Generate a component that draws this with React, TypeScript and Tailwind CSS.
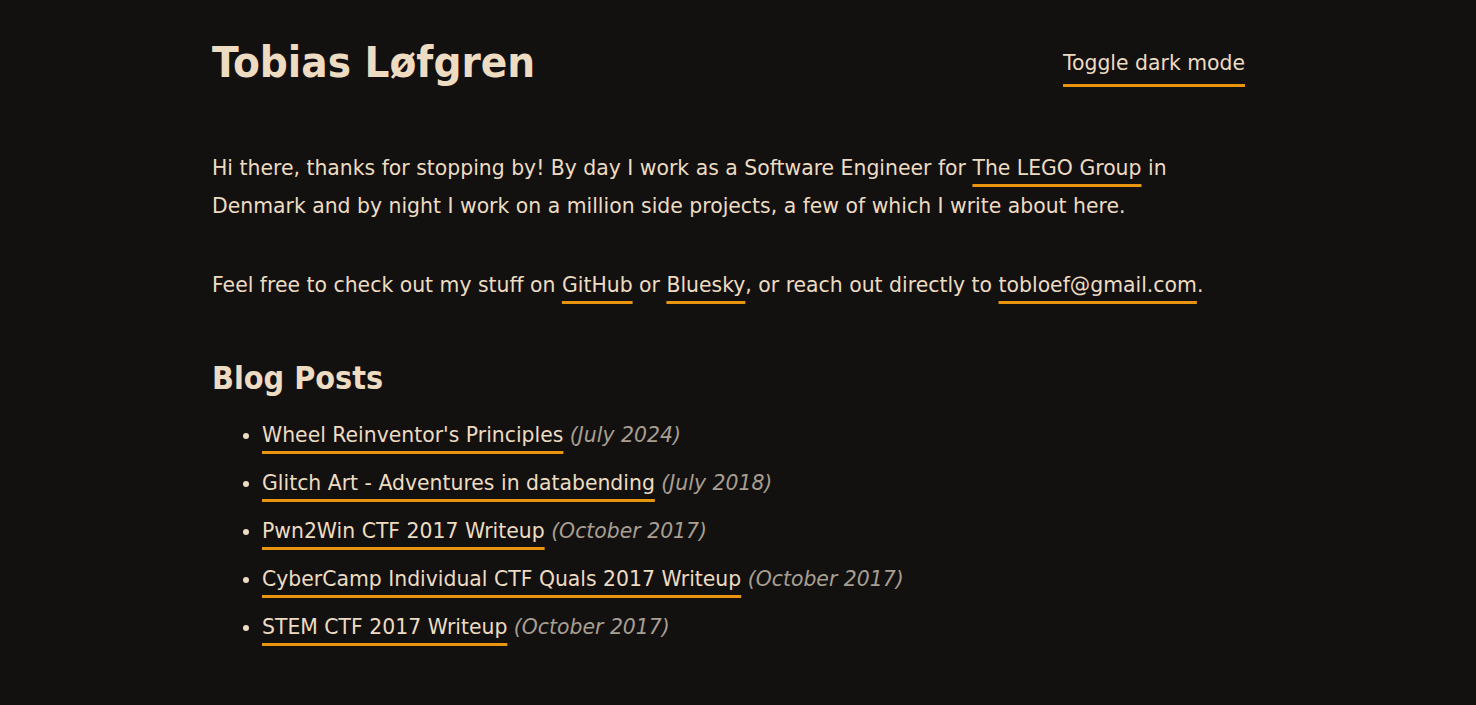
const link =
  "underline decoration-[#e8940c] decoration-[length:3px] underline-offset-[9px] [text-decoration-skip-ink:none]";

const posts = [
  { title: "Wheel Reinventor's Principles", date: "July 2024" },
  { title: "Glitch Art - Adventures in databending", date: "July 2018" },
  { title: "Pwn2Win CTF 2017 Writeup", date: "October 2017" },
  { title: "CyberCamp Individual CTF Quals 2017 Writeup", date: "October 2017" },
  { title: "STEM CTF 2017 Writeup", date: "October 2017" },
];

export default function App() {
  return (
    <div className="min-h-[705px] bg-[#121110] text-[#eedcc2] font-['DejaVu_Sans',sans-serif] text-[20.4px] leading-[38px]">
      <div className="mx-auto w-[1052px] pr-[19px] pt-[36px] pb-10">
        {/* Header */}
        <header className="flex items-center justify-between">
          <h1 className="font-['DejaVu_Sans_Condensed','DejaVu_Sans',sans-serif] text-[43.5px] leading-[53px] font-bold">
            Tobias Løfgren
          </h1>
          <a
            href="#"
            className="underline decoration-[#e8940c] decoration-[length:3px] underline-offset-[14px] [text-decoration-skip-ink:none]"
          >
            Toggle dark mode
          </a>
        </header>

        {/* Intro */}
        <p className="mt-[60px]">
          Hi there, thanks for stopping by! By day I work as a Software Engineer for{" "}
          <a href="#" className={link}>
            The LEGO Group
          </a>{" "}
          in Denmark and by night I work on a million side projects, a few of which I write
          about here.
        </p>
        <p className="mt-[41px]">
          Feel free to check out my stuff on{" "}
          <a href="#" className={link}>
            GitHub
          </a>{" "}
          or{" "}
          <a href="#" className={link}>
            Bluesky
          </a>
          , or reach out directly to{" "}
          <a href="#" className={link}>
            tobloef@gmail.com
          </a>
          .
        </p>

        {/* Blog posts */}
        <h2 className="mt-[54px] font-['DejaVu_Sans_Condensed','DejaVu_Sans',sans-serif] text-[32px] leading-[40px] font-bold">
          Blog Posts
        </h2>
        <ul className="mt-[18px] list-disc pl-[50px]">
          {posts.map((post) => (
            <li key={post.title} className="mb-[10px]">
              <a href="#" className={link}>
                {post.title}
              </a>{" "}
              <span className="italic text-[#a89f92]">({post.date})</span>
            </li>
          ))}
        </ul>
      </div>
    </div>
  );
}
